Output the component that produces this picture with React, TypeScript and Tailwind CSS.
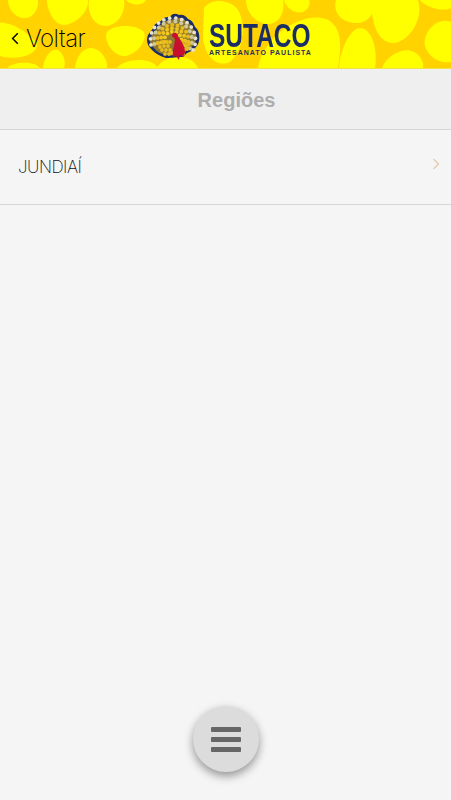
import React from "react";

const blobs = [
  "M8 0 C8 10 16 19 26 18 C34 17 39 8 38 0 Z",
  "M47 0 C47 10 54 25 64 25 C76 24 89 12 88 0 Z",
  "M89 0 C87 10 92 26 106 26 C118 25 126 12 124 0 Z",
  "M126 0 C130 5 142 7 146 0 Z",
  "M-4 23 C10 19 33 36 37 44 C38 54 20 60 4 57 L-4 55 Z",
  "M107 32 C114 24 136 24 144 32 C148 42 134 57 122 56 C112 54 103 40 107 32 Z",
  "M75 68 C76 56 84 47 92 48 C102 50 108 60 107 68 Z",
  "M43 68 C44 56 52 48 58 50 C64 54 66 62 64 68 Z",
  "M7 68 C12 62 34 60 40 68 Z",
  "M117 68 C122 60 150 55 158 68 Z",
  "M157 68 C162 56 190 50 198 68 Z",
  "M204 8 C212 -4 236 0 240 14 C246 30 242 52 230 62 C216 68 206 56 203 40 Z",
  "M246 0 C246 14 258 25 270 24 C282 22 285 8 283 0 Z",
  "M284 0 C286 10 300 16 306 10 C310 6 310 2 309 0 Z",
  "M258 68 C262 40 296 14 322 18 C342 22 342 44 338 68 Z",
  "M336 0 C332 14 344 24 358 23 C370 22 376 10 374 0 Z",
  "M372 0 C370 22 378 44 394 43 C410 41 424 18 418 0 Z",
  "M420 0 C426 8 444 12 451 8 L451 0 Z",
  "M339 68 C340 50 350 28 360 28 C372 28 378 50 375 68 Z",
  "M382 68 C386 56 404 46 414 52 C422 56 424 64 423 68 Z",
  "M451 22 C436 16 422 34 425 46 C428 56 438 64 451 62 Z",
];

// feather "eyes" of the peacock's tail, laid out in rings round the body
const rings = [
  { r: 22.5, n: 15, size: 1.9, fill: "#e6e3d0" },
  { r: 19, n: 13, size: 2, fill: "#cfc9a0" },
  { r: 15.5, n: 12, size: 2, fill: "#e8bb1e" },
  { r: 12, n: 10, size: 2, fill: "#f0c41c" },
  { r: 8.5, n: 8, size: 1.9, fill: "#f4cc20" },
];
const dots = rings.flatMap((ring) =>
  Array.from({ length: ring.n }, (_, i) => {
    const a = Math.PI * (0.93 + (1.22 * i) / (ring.n - 1));
    return {
      cx: 27 + ring.r * Math.cos(a),
      cy: 28 + ring.r * Math.sin(a) * 0.98,
      r: ring.size,
      fill: ring.fill,
    };
  })
);
const lowerDots = [
  [14, 35], [18, 34], [22, 34], [12, 31], [16, 38], [20, 38], [24, 38], [19, 42], [23, 42], [26, 41],
  [40, 34], [43, 32], [38, 38], [41, 37], [37, 42], [24, 30], [21, 30], [17, 30], [40, 30], [36, 30],
];

const PeacockLogo = () => (
  <svg viewBox="0 0 54 50" className="mt-[5px] h-[50px] w-[54px] shrink-0 blur-[0.6px]">
    <path
      d="M1 28 C1 22 5 20 7 16 C8 12 12 10 15 9 C17 5 21 5 24 5 C26 1 30 1 33 3 C37 2 40 4 42 7 C46 8 48 12 49 15 C53 18 54 24 53 29 C52 35 46 39 41 41 L37 45 C30 45 27 46 20 46 C14 44 10 42 6 38 C3 35 1 32 1 28 Z"
      fill="#1b2c66"
    />
    <path
      d="M4 28 C4 23 8 22 10 18 C11 14 14 13 17 12 C19 8 23 8 26 8 C28 5 31 5 33 6 C36 5 39 7 40 10 C44 11 46 14 47 17 C50 20 51 24 50 28 C49 33 44 37 39 39 L35 42 C29 43 26 44 21 43 C15 42 11 40 8 36 C5 34 4 31 4 28 Z"
      fill="#8f7a30"
    />
    {dots.map((d, i) => (
      <circle key={i} cx={d.cx} cy={d.cy} r={d.r} fill={d.fill} />
    ))}
    {lowerDots.map(([cx, cy], i) => (
      <circle key={i} cx={cx} cy={cy} r={1.9} fill="#e8bb1e" />
    ))}
    <path
      d="M28 21 C30 20 32 22 32 25 C35 28 39 34 39 40 L37 45 L34 43 L33 48 L30 44 L27 45 C26 38 29 32 29 27 L26 24 C26 22 27 21 28 21 Z"
      fill="#c8102e"
    />
  </svg>
);

export default function App() {
  return (
    <div className="relative h-[800px] w-[451px] overflow-hidden bg-[#f5f5f5] font-['Liberation_Sans',sans-serif]">
      <header className="relative flex h-[69px] items-center border-b border-[#f2e24a] bg-[#ffd200]">
        <svg viewBox="0 0 451 68" className="absolute inset-0 h-[68px] w-[451px] blur-[0.5px]">
          {blobs.map((d, i) => (
            <path key={i} d={d} fill="#ffff00" />
          ))}
        </svg>
        <div className="relative flex w-full items-center">
          <div className="flex w-[146px] items-center pt-[9px] pl-[11px] text-black">
            <svg viewBox="0 0 10 16" className="mr-[7px] h-[15px] w-[8px]" fill="none" stroke="currentColor" strokeWidth="1.8">
              <path d="M8.5 1.5 L2 8 L8.5 14.5" />
            </svg>
            <span className="font-['Inter',sans-serif] text-[24px] leading-none font-[250] tracking-[-0.5px]">Voltar</span>
          </div>
          <PeacockLogo />
          <div className="mt-[11px] ml-[9px] flex w-[104px] flex-col items-start text-[#1b2c66]">
            <span className="origin-left scale-x-[0.72] text-[34px] leading-[25px] font-bold whitespace-nowrap">SUTACO</span>
            <span className="mt-[1px] text-[7px] leading-[8px] font-bold tracking-[1px] whitespace-nowrap text-[#2a3358]">ARTESANATO PAULISTA</span>
          </div>
        </div>
      </header>

      <div className="flex h-[61px] items-center justify-center border-b border-[#d6d6d6] bg-[#efefef] pt-[2px] pl-[22px]">
        <h1 className="text-[20px] font-bold text-[#aeaeae]">Regiões</h1>
      </div>

      <div className="flex h-[75px] items-center justify-between border-b border-[#d6d6d6] pt-[2px] pr-[11px] pl-[18px]">
        <span className="font-['Inter',sans-serif] text-[17px] font-[250] tracking-[-0.5px] text-[#111111]">JUNDIAÍ</span>
        <svg viewBox="0 0 8 12" className="mb-[8px] h-[12px] w-[8px]" fill="none" stroke="#e6c9ab" strokeWidth="1.3">
          <path d="M1.5 1 L6.5 6 L1.5 11" />
        </svg>
      </div>

      <button className="absolute top-[706px] left-[193px] flex h-[66px] w-[66px] flex-col items-center justify-center gap-[5px] rounded-full bg-[#dcdcdc] shadow-[0_4px_10px_rgba(0,0,0,0.4)]">
        <span className="h-[5px] w-[30px] rounded-[1px] bg-[#666666]" />
        <span className="h-[5px] w-[30px] rounded-[1px] bg-[#666666]" />
        <span className="h-[5px] w-[30px] rounded-[1px] bg-[#666666]" />
      </button>
    </div>
  );
}
